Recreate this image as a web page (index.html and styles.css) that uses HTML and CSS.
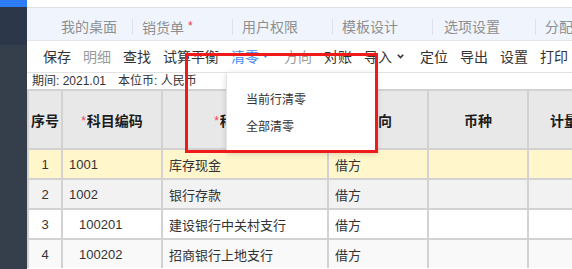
FILE: index.html
```html
<!DOCTYPE html>
<html lang="zh-CN">
<head>
<meta charset="utf-8">
<title>科目设置</title>
<link rel="stylesheet" href="styles.css">
</head>
<body>
<div class="app">
  <aside class="sidebar">
    <div class="sb-top"></div>
    <div class="sb-head"></div>
    <div class="sb-body"></div>
  </aside>
  <main class="main">
    <div class="topstrip"></div>
    <nav class="tabs">
      <span class="tab tab-first">我的桌面</span>
      <span class="sep"></span>
      <span class="tab">销货单<span class="tab-star">*</span></span>
      <span class="sep"></span>
      <span class="tab">用户权限</span>
      <span class="sep"></span>
      <span class="tab">模板设计</span>
      <span class="sep"></span>
      <span class="tab tab-wide">选项设置</span>
      <span class="sep"></span>
      <span class="tab">分配权限</span>
    </nav>
    <div class="toolbar">
      <span class="tool">保存</span>
      <span class="tool tool-off">明细</span>
      <span class="tool">查找</span>
      <span class="tool">试算平衡</span>
      <span class="tool tool-active">清零<span class="caret caret-tri"><svg width="5" height="3" viewBox="0 0 5 3"><path d="M0 0H5L2.5 3Z" fill="#3d8af0"/></svg></span></span>
      <span class="tool tool-off">方向</span>
      <span class="tool">对账</span>
      <span class="tool">导入<span class="caret caret-chev"><svg width="7" height="5" viewBox="0 0 7 5"><path d="M0.8 0.8L3.5 3.6L6.2 0.8" fill="none" stroke="#333" stroke-width="1.6"/></svg></span></span>
      <span class="tool">定位</span>
      <span class="tool">导出</span>
      <span class="tool">设置</span>
      <span class="tool">打印<span class="caret caret-tri"><svg width="5" height="3" viewBox="0 0 5 3"><path d="M0 0H5L2.5 3Z" fill="#333"/></svg></span></span>
    </div>
    <div class="info">
      <span>期间: 2021.01</span>
      <span>本位币: 人民币</span>
    </div>
    <div class="grid">
      <div class="row row-head">
        <div class="hcell">序号</div>
        <div class="hcell"><span class="req">*</span>科目编码</div>
        <div class="hcell"><span class="req">*</span>科目名称</div>
        <div class="hcell">方向</div>
        <div class="hcell">币种</div>
        <div class="hcell">计量单位</div>
      </div>
      <div class="row row-sel">
        <div class="cell cell-num">1</div>
        <div class="cell">1001</div>
        <div class="cell">库存现金</div>
        <div class="cell">借方</div>
        <div class="cell"></div>
        <div class="cell"></div>
      </div>
      <div class="row row-gray">
        <div class="cell cell-num">2</div>
        <div class="cell">1002</div>
        <div class="cell">银行存款</div>
        <div class="cell">借方</div>
        <div class="cell"></div>
        <div class="cell"></div>
      </div>
      <div class="row row-white">
        <div class="cell cell-num">3</div>
        <div class="cell cell-sub">100201</div>
        <div class="cell">建设银行中关村支行</div>
        <div class="cell">借方</div>
        <div class="cell"></div>
        <div class="cell"></div>
      </div>
      <div class="row row-light">
        <div class="cell cell-num">4</div>
        <div class="cell cell-sub">100202</div>
        <div class="cell">招商银行上地支行</div>
        <div class="cell">借方</div>
        <div class="cell"></div>
        <div class="cell"></div>
      </div>
    </div>
  </main>
</div>
<div class="dropdown">
  <div class="dd-item">当前行清零</div>
  <div class="dd-item">全部清零</div>
</div>
<div class="highlight"></div>
</body>
</html>
```
FILE: styles.css
```css
* { box-sizing: border-box; }
html, body {
  margin: 0;
  height: 100%;
  overflow: hidden;
}
body {
  font-family: "Liberation Sans", "Noto Sans CJK SC", sans-serif;
  font-size: 13px;
  color: #333;
  background: #fff;
}
.app {
  display: flex;
  height: 269px;
}
.sidebar {
  width: 27px;
  flex: none;
  display: flex;
  flex-direction: column;
  background: #353f4c;
}
.sb-top { height: 7px; background: #2f7df6; }
.sb-head { height: 38px; background: #2c3749; }
.sb-body { flex: 1; }

.main {
  flex: 1;
  min-width: 0;
  display: flex;
  flex-direction: column;
  overflow: hidden;
}
.topstrip {
  height: 8px;
  flex: none;
  border-bottom: 1px solid #dcdfe3;
}
.tabs {
  height: 33px;
  flex: none;
  display: flex;
  align-items: center;
  padding: 6px 0 0 24px;
  background: #f0f5fd;
  border-bottom: 1px solid #e1e4e8;
  font-size: 14px;
  line-height: 20px;
  color: #8f8f8f;
  white-space: nowrap;
}
.tab {
  flex: none;
  width: 99px;
  padding-left: 9px;
}
.tab-first { width: 81px; padding-left: 10px; }
.tab-wide { width: 102px; padding-left: 11px; }
.tab-star {
  color: #f23b3b;
  font-size: 12px;
  margin-left: 4px;
  vertical-align: 3px;
}
.sep {
  flex: none;
  width: 1px;
  height: 16px;
  background: #dde2ea;
}

.toolbar {
  height: 32px;
  flex: none;
  display: flex;
  align-items: center;
  gap: 12px;
  padding-left: 16px;
  border-bottom: 1px solid #e2e2e2;
  font-size: 14px;
  line-height: 20px;
  color: #333;
  white-space: nowrap;
}
.tool { display: flex; align-items: center; flex: none; }
.tool-off { color: #9a9a9a; }
.tool-active { color: #3d8af0; }
.caret { display: flex; align-items: center; }
.caret-tri { width: 13px; padding-left: 4px; }
.caret-chev { width: 16px; padding-left: 5px; }

.info {
  height: 16px;
  flex: none;
  display: flex;
  gap: 12px;
  align-items: center;
  padding-left: 5px;
  font-size: 12px;
  line-height: 16px;
  color: #333;
  white-space: nowrap;
}

.grid {
  flex: none;
  display: flex;
  flex-direction: column;
  gap: 2px;
  padding: 2px 0 0 2px;
  background: #d2d2d2;
}
.row {
  display: grid;
  grid-template-columns: 32px 98px 164px 98px 98px 98px;
  gap: 2px;
  height: 28px;
}
.row-head { height: 57px; }
.hcell {
  display: flex;
  align-items: center;
  justify-content: center;
  background: #e8e8e8;
  font-size: 14px;
  font-weight: bold;
  color: #1c1c1c;
  white-space: nowrap;
}
.req {
  color: #ee3f62;
  font-size: 12px;
  font-weight: normal;
  align-self: flex-start;
  margin-top: 23px;
  margin-right: 1px;
}
.cell {
  display: flex;
  align-items: center;
  padding: 0 6px;
  font-size: 13px;
  color: #333;
  white-space: nowrap;
}
.cell-num { justify-content: center; padding: 0; }
.cell-sub { padding-left: 16px; }
.row-sel .cell { background: #fff6cc; }
.row-gray .cell { background: #f2f2f2; }
.row-white .cell { background: #fff; }
.row-light .cell { background: #f9f9f9; }

.dropdown {
  position: absolute;
  left: 226px;
  top: 72px;
  width: 151px;
  height: 80px;
  padding-top: 14px;
  background: #fff;
  border: 1px solid #e4e4e4;
  box-shadow: 0 2px 6px rgba(0, 0, 0, 0.15);
}
.dd-item {
  height: 27px;
  line-height: 27px;
  padding-left: 19px;
  font-size: 12px;
  color: #333;
}
.highlight {
  position: absolute;
  left: 185px;
  top: 53px;
  width: 193px;
  height: 100px;
  border: 3px solid #f01a1a;
}
```
